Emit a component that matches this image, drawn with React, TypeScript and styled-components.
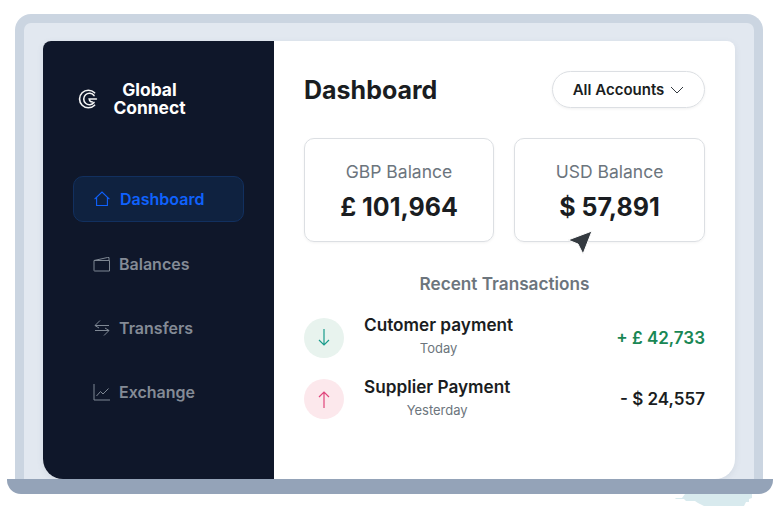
import React from "react";
import styled, { createGlobalStyle } from "styled-components";

const GlobalStyle = createGlobalStyle`
  html, body {
    margin: 0;
    padding: 0;
    background: #fff;
    font-family: Inter, "Liberation Sans", sans-serif;
  }
`;

const Page = styled.div`
  position: relative;
  width: 782px;
  height: 506px;
  padding: 14px 9px 0 7px;
  box-sizing: border-box;
`;

const Lid = styled.div`
  margin: 0 10px 0 8px;
  height: 465px;
  box-sizing: border-box;
  padding: 18px 19px 0 19px;
  background: #e2e8f0;
  border: 9px solid #cbd5e1;
  border-bottom: none;
  border-radius: 16px 16px 0 0;
`;

const Screen = styled.div`
  display: flex;
  height: 438px;
  border-radius: 8px 8px 20px 20px;
  background: #fff;
  box-shadow: 0 2px 6px rgba(100, 116, 139, 0.12);
`;

const Base = styled.div`
  height: 15px;
  background: #94a3b8;
  border-radius: 0 0 14px 14px;
`;

const Sidebar = styled.aside`
  width: 231px;
  flex: none;
  background: #0f172a;
  border-radius: 8px 0 0 20px;
  padding: 40px 30px 0;
  box-sizing: border-box;
`;

const Brand = styled.div`
  display: flex;
  align-items: center;
  margin-left: 5px;
  height: 36px;
`;

const BrandName = styled.div`
  width: 73px;
  margin-left: 15px;
  color: #fff;
  font-size: 17.4px;
  font-weight: 700;
  line-height: 18px;
  text-align: center;
  white-space: nowrap;
`;

const Nav = styled.nav`
  display: flex;
  flex-direction: column;
  gap: 18px;
  margin-top: 59px;
`;

const NavItem = styled.div<{ $active?: boolean }>`
  display: flex;
  align-items: center;
  gap: ${(p) => (p.$active ? "9px" : "8px")};
  height: 46px;
  box-sizing: border-box;
  padding-left: 19px;
  border-radius: 10px;
  border: 1px solid ${(p) => (p.$active ? "#12305f" : "transparent")};
  background: ${(p) => (p.$active ? "#0f2240" : "transparent")};
  color: ${(p) => (p.$active ? "#0f62fe" : "#848b96")};
  font-size: 16px;
  font-weight: 600;
  svg {
    flex: none;
  }
  & + & {
    padding-top: 2px;
  }
`;

const Main = styled.main`
  flex: 1;
  padding: 30px 30px 0;
  color: #1a1d21;
`;

const Header = styled.header`
  display: flex;
  align-items: center;
  justify-content: space-between;
  height: 37px;
`;

const Title = styled.h1`
  margin: 0;
  font-size: 25px;
  font-weight: 700;
`;

const Select = styled.div`
  display: flex;
  align-items: center;
  justify-content: center;
  gap: 6px;
  width: 153px;
  height: 37px;
  box-sizing: border-box;
  border: 1px solid #dcdfe3;
  border-radius: 19px;
  box-shadow: 0 1px 3px rgba(0, 0, 0, 0.06);
  font-size: 15px;
  font-weight: 600;
`;

const Cards = styled.section`
  display: grid;
  grid-template-columns: 190px 1fr;
  gap: 20px;
  margin-top: 30px;
`;

const Card = styled.div`
  height: 104px;
  box-sizing: border-box;
  padding-top: 22px;
  border: 1px solid #dcdfe3;
  border-radius: 10px;
  box-shadow: 0 1px 3px rgba(0, 0, 0, 0.05);
  text-align: center;
`;

const CardLabel = styled.div`
  color: #6c757d;
  font-size: 17.5px;
  line-height: 22px;
`;

const CardValue = styled.div`
  margin-top: 8px;
  font-size: 25px;
  font-weight: 700;
  line-height: 32px;
`;

const SectionTitle = styled.h2`
  margin: 31px 0 0;
  color: #6c757d;
  font-size: 17.2px;
  font-weight: 600;
  line-height: 22px;
  text-align: center;
`;

const List = styled.div`
  display: flex;
  flex-direction: column;
  gap: 21px;
  margin-top: 23px;
`;

const Row = styled.div`
  display: flex;
  align-items: center;
  height: 40px;
`;

const RoundIcon = styled.div<{ $tone: string }>`
  display: flex;
  align-items: center;
  justify-content: center;
  width: 40px;
  height: 40px;
  flex: none;
  border-radius: 50%;
  background: ${(p) => p.$tone};
`;

const Info = styled.div<{ $lift: number }>`
  margin: ${(p) => -p.$lift}px 0 0 20px;
  text-align: center;
`;

const Name = styled.div`
  font-size: 17.2px;
  font-weight: 600;
  line-height: 20px;
`;

const When = styled.div`
  margin-top: 5px;
  color: #6c757d;
  font-size: 13px;
  line-height: 16px;
`;

const Amount = styled.div<{ $positive?: boolean }>`
  margin-left: auto;
  color: ${(p) => (p.$positive ? "#198754" : "#1a1d21")};
  font-size: 17px;
  font-weight: 600;
`;

const Pointer = styled.svg`
  position: absolute;
  left: 567px;
  top: 229px;
`;

const Speck = styled.svg`
  position: absolute;
  left: 674px;
  top: 493px;
`;

const Logo = () => (
  <svg width="20" height="20" viewBox="0 0 20 20" fill="none" stroke="#f4f4f4" strokeWidth="1.6" strokeLinecap="round">
    <path d="M16.6 3.8A8.8 8.8 0 1 0 16.6 16.2" />
    <path d="M16 6.6A5.7 5.7 0 1 0 16 13.4" />
    <path d="M18.4 10H11.2A3.4 3.4 0 0 0 14.4 13" />
  </svg>
);

const HomeIcon = () => (
  <svg width="18" height="18" viewBox="0 0 18 18" fill="none" stroke="currentColor" strokeWidth="1.1">
    <path d="M1.6 9.2 9 2l7.4 7.2M3.6 7.6V15.5h10.8V7.6" />
  </svg>
);

const WalletIcon = () => (
  <svg width="18" height="18" viewBox="0 0 18 18" fill="none" stroke="#7f8894" strokeWidth="1">
    <path d="M1 5.5 14.5 2.5h1.5v3M1 5.5h15.5V16H1.5A.5.5 0 0 1 1 15.5Z" />
  </svg>
);

const TransferIcon = () => (
  <svg width="18" height="18" viewBox="0 0 18 18" fill="none" stroke="#7f8894" strokeWidth="1">
    <path d="M7 1.5 2 6.5h14M2 6.5 6 9" />
    <path d="M2 11.5h14l-5 5M16 11.5 12 9" />
  </svg>
);

const ChartIcon = () => (
  <svg width="18" height="18" viewBox="0 0 18 18" fill="none" stroke="#7f8894" strokeWidth="1">
    <path d="M1 1v16h16" />
    <path d="M3.5 13 7.5 8.5l2.5 2.5 5.5-5.5" />
  </svg>
);

const ChevronIcon = () => (
  <svg width="14" height="10" viewBox="0 0 14 10" fill="none" stroke="#343a40" strokeWidth="1">
    <path d="M1 2l6 6 6-6" />
  </svg>
);

const ArrowDown = () => (
  <svg width="16" height="20" viewBox="0 0 16 20" fill="none" stroke="#1a9c8c" strokeWidth="1.2">
    <path d="M8 1v16M3 12l5 5 5-5" />
  </svg>
);

const ArrowUp = () => (
  <svg width="16" height="20" viewBox="0 0 16 20" fill="none" stroke="#e0457b" strokeWidth="1.2">
    <path d="M8 19V3M3 8l5-5 5 5" />
  </svg>
);

const navItems = [
  { label: "Balances", icon: <WalletIcon /> },
  { label: "Transfers", icon: <TransferIcon /> },
  { label: "Exchange", icon: <ChartIcon /> },
];

export default function App() {
  return (
    <Page>
      <GlobalStyle />
      <Lid>
        <Screen>
          <Sidebar>
            <Brand>
              <Logo />
              <BrandName>
                <div>Global</div>
                <div>Connect</div>
              </BrandName>
            </Brand>
            <Nav>
              <NavItem $active>
                <HomeIcon />
                Dashboard
              </NavItem>
              {navItems.map((item) => (
                <NavItem key={item.label}>
                  {item.icon}
                  {item.label}
                </NavItem>
              ))}
            </Nav>
          </Sidebar>
          <Main>
            <Header>
              <Title>Dashboard</Title>
              <Select>
                All Accounts
                <ChevronIcon />
              </Select>
            </Header>
            <Cards>
              <Card>
                <CardLabel>GBP Balance</CardLabel>
                <CardValue>£ 101,964</CardValue>
              </Card>
              <Card>
                <CardLabel>USD Balance</CardLabel>
                <CardValue>$ 57,891</CardValue>
              </Card>
            </Cards>
            <SectionTitle>Recent Transactions</SectionTitle>
            <List>
              <Row>
                <RoundIcon $tone="#e8f3ee">
                  <ArrowDown />
                </RoundIcon>
                <Info $lift={5}>
                  <Name>Cutomer payment</Name>
                  <When>Today</When>
                </Info>
                <Amount $positive>+ £ 42,733</Amount>
              </Row>
              <Row>
                <RoundIcon $tone="#fce8ec">
                  <ArrowUp />
                </RoundIcon>
                <Info $lift={3}>
                  <Name>Supplier Payment</Name>
                  <When>Yesterday</When>
                </Info>
                <Amount>- $ 24,557</Amount>
              </Row>
            </List>
          </Main>
        </Screen>
      </Lid>
      <Base />
      <Pointer width="26" height="26" viewBox="0 0 26 26">
        <path d="M25 2 16 25 11 15 1 11Z" fill="#343a40" stroke="#fff" strokeWidth="1" strokeLinejoin="round" />
      </Pointer>
      <Speck width="80" height="13" viewBox="0 0 80 13">
        <path d="M1 5h7l3-4h67v4l-3 1v3H72l-2 4H30l-6-3-3-2H12l-2-2H2Z" fill="#d8eaee" />
      </Speck>
    </Page>
  );
}
